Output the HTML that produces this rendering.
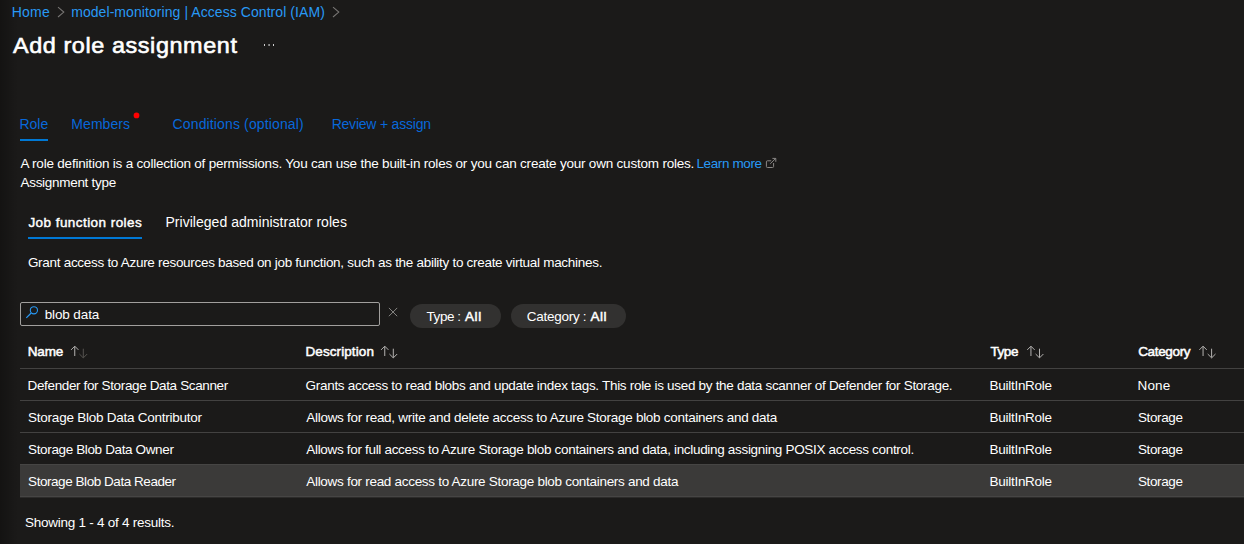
<!DOCTYPE html>
<html lang="en"><head><meta charset="utf-8"><title>Add role assignment</title>
<style>
html,body{margin:0;padding:0}
body{width:1244px;height:544px;background:#1b1a19;overflow:hidden;position:relative;font-family:"Liberation Sans", sans-serif;}
.t{position:absolute;white-space:nowrap;line-height:20px;transform-origin:0 0;}

.sh{position:absolute;left:0;top:0;width:18px;height:544px;background:linear-gradient(to right,rgba(0,0,0,.28),rgba(0,0,0,0));}
.ul{position:absolute;height:2px;background:#0078d4;}
.inp{position:absolute;left:20px;top:302px;width:358px;height:22px;border:1px solid #a19f9d;border-radius:2px;}
.pill{position:absolute;top:304px;height:24px;border-radius:12px;background:#323130;}
.ln{position:absolute;left:20px;width:1224px;height:1px;background:#434241;}
.sel{position:absolute;left:20px;top:464px;width:1224px;height:33px;background:#3b3a39;}
svg.ov{position:absolute;left:0;top:0;}
</style></head>
<body>
<div class="sh"></div>
<div class="ul" style="left:20px;top:139px;width:28px"></div>
<div class="ul" style="left:28px;top:237px;width:114px"></div>
<div class="inp"></div>
<div class="pill" style="left:410px;width:91px"></div>
<div class="pill" style="left:511px;width:115px"></div>
<div class="ln" style="top:368px"></div>
<div class="ln" style="top:400px"></div>
<div class="ln" style="top:432px"></div>
<div class="sel"></div>
<div class="ln" style="top:464px;background:#464544"></div>
<div class="ln" style="top:496px;background:#464544"></div>
<div class="ln" style="top:497px;background:#2c2b2a"></div>
<svg class="ov" width="1244" height="544" viewBox="0 0 1244 544"><polyline points="58.0,7.2 63.8,12.10 58.0,17.0" fill="none" stroke="#787674" stroke-width="1.05"/><polyline points="333.0,7.2 338.8,12.10 333.0,17.0" fill="none" stroke="#787674" stroke-width="1.05"/><rect x="264" y="44" width="1" height="2" fill="#d0d0d0" opacity="1"/><rect x="268.3" y="44" width="1.6" height="2" fill="#d0d0d0" opacity="0.7"/><rect x="273" y="44" width="1" height="2" fill="#d0d0d0" opacity="1"/><circle cx="136.5" cy="115.45" r="2.85" fill="#ff0000"/><path d="M771.2 160.8H767.4a1 1 0 0 0 -1 1V166.5a1 1 0 0 0 1 1H772.6a1 1 0 0 0 1 -1V163" fill="none" stroke="#8a8886" stroke-width="1"/><path d="M770.2 163.9L775.6 158.5M772.4 158.4H775.8V161.8" fill="none" stroke="#8a8886" stroke-width="1"/><circle cx="33.9" cy="310.3" r="3.6" fill="none" stroke="#2899f5" stroke-width="1.1"/><path d="M31.2 313 L26.3 317.9" stroke="#2899f5" stroke-width="1.2" fill="none"/><path d="M388.9 307.9L397.2 316.2M397.2 307.9L388.9 316.2" stroke="#a19f9d" stroke-width="0.8" fill="none"/><path d="M74.75 356.00V346.40M71.05 349.90L74.75 346.20L78.45 349.90" fill="none" stroke="#b4b2b0" stroke-width="1"/><path d="M83.30 348.70V357.60M79.40 354.00L83.30 357.90L87.20 354.00" fill="none" stroke="#55534f" stroke-width="1"/><path d="M384.75 356.00V346.40M381.05 349.90L384.75 346.20L388.45 349.90" fill="none" stroke="#b4b2b0" stroke-width="1"/><path d="M393.30 348.70V357.60M389.40 354.00L393.30 357.90L397.20 354.00" fill="none" stroke="#b4b2b0" stroke-width="1"/><path d="M1030.95 356.00V346.40M1027.25 349.90L1030.95 346.20L1034.65 349.90" fill="none" stroke="#b4b2b0" stroke-width="1"/><path d="M1039.50 348.70V357.60M1035.60 354.00L1039.50 357.90L1043.40 354.00" fill="none" stroke="#b4b2b0" stroke-width="1"/><path d="M1203.05 356.00V346.40M1199.35 349.90L1203.05 346.20L1206.75 349.90" fill="none" stroke="#b4b2b0" stroke-width="1"/><path d="M1211.60 348.70V357.60M1207.70 354.00L1211.60 357.90L1215.50 354.00" fill="none" stroke="#b4b2b0" stroke-width="1"/></svg>
<span class="t" style="left:11.75px;top:2px;font-size:14px;color:#2899f5;letter-spacing:0.204px;">Home</span>
<span class="t" style="left:71.17px;top:2px;font-size:14px;color:#2899f5;letter-spacing:0.069px;">model-monitoring | Access Control (IAM)</span>
<span class="t" style="left:13.47px;top:36px;font-size:22px;color:#ffffff;letter-spacing:0.550px;-webkit-text-stroke:0.6px #ffffff;transform:scaleX(1.0638);">Add role assignment</span>
<span class="t" style="left:19.45px;top:114px;font-size:14px;color:#0868da;letter-spacing:-0.009px;">Role</span>
<span class="t" style="left:71.35px;top:114px;font-size:14px;color:#0868da;letter-spacing:0.049px;">Members</span>
<span class="t" style="left:172.59px;top:114px;font-size:14px;color:#0868da;letter-spacing:0.134px;">Conditions (optional)</span>
<span class="t" style="left:331.65px;top:114px;font-size:14px;color:#0868da;letter-spacing:-0.212px;">Review + assign</span>
<span class="t" style="left:20.47px;top:154px;font-size:13.5px;color:#ffffff;letter-spacing:-0.206px;">A role definition is a collection of permissions. You can use the built-in roles or you can create your own custom roles.</span>
<span class="t" style="left:696.49px;top:154px;font-size:13.5px;color:#2899f5;letter-spacing:-0.382px;">Learn more</span>
<span class="t" style="left:20.47px;top:173px;font-size:13.5px;color:#ffffff;letter-spacing:-0.292px;">Assignment type</span>
<span class="t" style="left:28.41px;top:213px;font-size:13.5px;color:#ffffff;letter-spacing:0.443px;-webkit-text-stroke:0.45px #ffffff;">Job function roles</span>
<span class="t" style="left:165.45px;top:212px;font-size:14px;color:#ffffff;letter-spacing:0.032px;">Privileged administrator roles</span>
<span class="t" style="left:27.92px;top:253px;font-size:13.5px;color:#ffffff;letter-spacing:-0.293px;">Grant access to Azure resources based on job function, such as the ability to create virtual machines.</span>
<span class="t" style="left:44.63px;top:305px;font-size:13.5px;color:#ffffff;letter-spacing:-0.112px;">blob data</span>
<span class="t" style="left:426.50px;top:307px;font-size:13.5px;color:#ffffff;letter-spacing:-0.429px;">Type :</span>
<span class="t" style="left:465.02px;top:307px;font-size:13.5px;color:#ffffff;letter-spacing:0.557px;-webkit-text-stroke:0.5px #ffffff;">All</span>
<span class="t" style="left:526.81px;top:307px;font-size:13.5px;color:#ffffff;letter-spacing:-0.274px;">Category :</span>
<span class="t" style="left:590.42px;top:307px;font-size:13.5px;color:#ffffff;letter-spacing:0.557px;-webkit-text-stroke:0.5px #ffffff;">All</span>
<span class="t" style="left:27.74px;top:342px;font-size:13.5px;color:#ffffff;letter-spacing:-0.169px;-webkit-text-stroke:0.5px #ffffff;">Name</span>
<span class="t" style="left:305.44px;top:342px;font-size:13.5px;color:#ffffff;letter-spacing:0.095px;-webkit-text-stroke:0.5px #ffffff;">Description</span>
<span class="t" style="left:990.45px;top:342px;font-size:13.5px;color:#ffffff;letter-spacing:-0.426px;-webkit-text-stroke:0.5px #ffffff;">Type</span>
<span class="t" style="left:1138.16px;top:342px;font-size:13.5px;color:#ffffff;letter-spacing:-0.338px;-webkit-text-stroke:0.5px #ffffff;">Category</span>
<span class="t" style="left:27.59px;top:376px;font-size:13.5px;color:#ffffff;letter-spacing:-0.367px;">Defender for Storage Data Scanner</span>
<span class="t" style="left:305.62px;top:376px;font-size:13.5px;color:#ffffff;letter-spacing:-0.305px;">Grants access to read blobs and update index tags. This role is used by the data scanner of Defender for Storage.</span>
<span class="t" style="left:989.49px;top:376px;font-size:13.5px;color:#ffffff;letter-spacing:-0.269px;">BuiltInRole</span>
<span class="t" style="left:1137.49px;top:376px;font-size:13.5px;color:#ffffff;letter-spacing:0.142px;">None</span>
<span class="t" style="left:28.09px;top:408px;font-size:13.5px;color:#ffffff;letter-spacing:-0.244px;">Storage Blob Data Contributor</span>
<span class="t" style="left:306.27px;top:408px;font-size:13.5px;color:#ffffff;letter-spacing:-0.281px;">Allows for read, write and delete access to Azure Storage blob containers and data</span>
<span class="t" style="left:989.49px;top:408px;font-size:13.5px;color:#ffffff;letter-spacing:-0.269px;">BuiltInRole</span>
<span class="t" style="left:1137.99px;top:408px;font-size:13.5px;color:#ffffff;letter-spacing:-0.397px;">Storage</span>
<span class="t" style="left:28.09px;top:440px;font-size:13.5px;color:#ffffff;letter-spacing:-0.364px;">Storage Blob Data Owner</span>
<span class="t" style="left:306.27px;top:440px;font-size:13.5px;color:#ffffff;letter-spacing:-0.318px;">Allows for full access to Azure Storage blob containers and data, including assigning POSIX access control.</span>
<span class="t" style="left:989.49px;top:440px;font-size:13.5px;color:#ffffff;letter-spacing:-0.269px;">BuiltInRole</span>
<span class="t" style="left:1137.99px;top:440px;font-size:13.5px;color:#ffffff;letter-spacing:-0.397px;">Storage</span>
<span class="t" style="left:28.09px;top:472px;font-size:13.5px;color:#ffffff;letter-spacing:-0.449px;">Storage Blob Data Reader</span>
<span class="t" style="left:306.27px;top:472px;font-size:13.5px;color:#ffffff;letter-spacing:-0.299px;">Allows for read access to Azure Storage blob containers and data</span>
<span class="t" style="left:989.49px;top:472px;font-size:13.5px;color:#ffffff;letter-spacing:-0.269px;">BuiltInRole</span>
<span class="t" style="left:1137.99px;top:472px;font-size:13.5px;color:#ffffff;letter-spacing:-0.397px;">Storage</span>
<span class="t" style="left:24.99px;top:513px;font-size:13.5px;color:#ffffff;letter-spacing:-0.248px;">Showing 1 - 4 of 4 results.</span>
</body></html>
